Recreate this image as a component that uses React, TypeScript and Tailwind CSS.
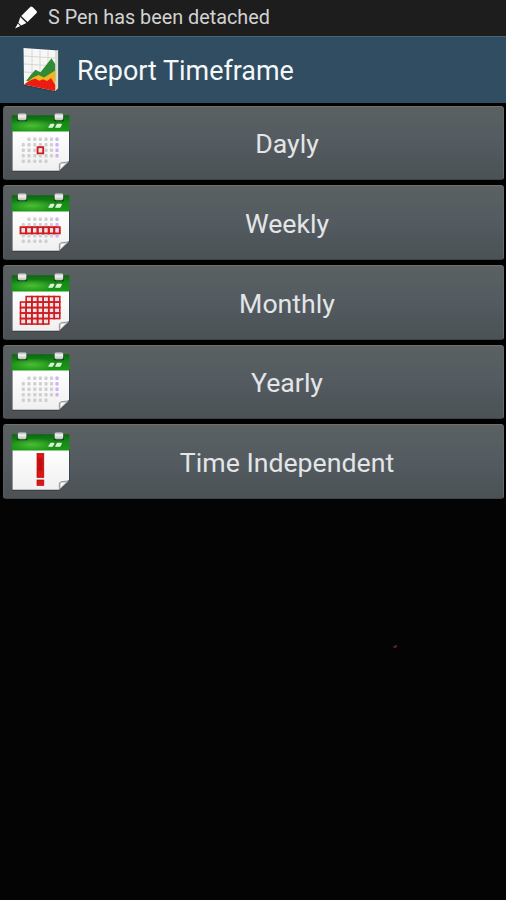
import React from 'react';

type Mark = 'day' | 'week' | 'month' | 'year' | 'none';

const COLS = [12.3, 18, 23.8, 29.4, 35, 40.5, 46];
const ROWS = [27.3, 32.8, 38.3, 43.8, 49.3];

const items: { label: string; mark: Mark }[] = [
  { label: 'Dayly', mark: 'day' },
  { label: 'Weekly', mark: 'week' },
  { label: 'Monthly', mark: 'month' },
  { label: 'Yearly', mark: 'year' },
  { label: 'Time Independent', mark: 'none' },
];

// first row starts on the second column, last row stops at the fifth
const isInMonth = (row: number, col: number) => !(row === 0 && col === 0) && !(row === 4 && col > 4);

const isMarked = (mark: Mark, row: number, col: number) => {
  if (mark === 'day') return row === 2 && col === 3;
  if (mark === 'week') return row === 2;
  return mark === 'month' && isInMonth(row, col);
};

const CalendarIcon: React.FC<{ mark: Mark }> = ({ mark }) => (
  <svg viewBox="0 0 60 60" className="mb-px h-[60px] w-[60px] shrink-0">
    <defs>
      <linearGradient id={`top-${mark}`} x1="0" y1="0" x2="0" y2="1">
        <stop offset="0" stopColor="#0c650e" />
        <stop offset="0.45" stopColor="#178719" />
        <stop offset="1" stopColor="#189a14" />
      </linearGradient>
      <radialGradient id={`glow-${mark}`} cx="0.35" cy="0.65" r="0.4">
        <stop offset="0" stopColor="#5cc93d" stopOpacity="0.8" />
        <stop offset="1" stopColor="#5cc93d" stopOpacity="0" />
      </radialGradient>
      <linearGradient id={`ring-${mark}`} x1="0" y1="0" x2="0" y2="1">
        <stop offset="0" stopColor="#a5aaa5" />
        <stop offset="0.4" stopColor="#f4f4f4" />
        <stop offset="1" stopColor="#b8bdb8" />
      </linearGradient>
      <linearGradient id={`page-${mark}`} x1="0" y1="0" x2="0" y2="1">
        <stop offset="0" stopColor="#ffffff" />
        <stop offset="1" stopColor="#f0f0f1" />
      </linearGradient>
    </defs>
    <path d="M1.2 18H58.5V50L48.5 59.5H1.2Z" fill="#2e3336" />
    <path d="M1.5 18H58V49.5L48.5 58.8H1.5Z" fill={`url(#page-${mark})`} />
    <path d="M0.8 3.2H58.4V19.4H0.8Z" fill={`url(#top-${mark})`} />
    <path d="M0.8 3.2H58.4V19.4H0.8Z" fill={`url(#glow-${mark})`} />
    {[6.8, 43.6].map((x) => (
      <g key={x}>
        <rect x={x - 0.8} y="3.4" width="10.2" height="5.8" rx="1" fill="#0a4b0c" />
        <rect x={x} y="1.2" width="8.6" height="7" rx="1.6" fill={`url(#ring-${mark})`} />
      </g>
    ))}
    <path
      d="M38 15.2L39.8 12.5H42.8L41.3 15.2ZM44.8 15.2L46.3 12.5H50.3L48.8 15.2Z"
      fill="#d9f3d5"
      stroke="#d9f3d5"
      strokeWidth="1.3"
      strokeLinejoin="round"
    />
    {mark === 'none' ? (
      <g fill="#e01414" stroke="#a80e0e" strokeWidth="0.7">
        <rect x="26" y="22.4" width="6.8" height="24" />
        <path d="M27.3 27H31.5V40H27.3Z" fill="#b70b0b" stroke="none" opacity="0.7" />
        <rect x="26" y="49" width="6.8" height="5.4" />
      </g>
    ) : (
      ROWS.map((y, row) =>
        COLS.map((x, col) => {
          const marked = isMarked(mark, row, col);
          return (
            <g key={`${row}-${col}`}>
              {isInMonth(row, col) && (
                <rect
                  x={x - 1.6}
                  y={y - 1.7}
                  width="3.2"
                  height="3.4"
                  rx="1"
                  fill={col === 6 ? '#c8a5f5' : '#c9c9cb'}
                  opacity={marked ? 0.35 : 0.85}
                />
              )}
              {marked && (
                <rect
                  x={x - 2.8}
                  y={y - (mark === 'month' ? 2.75 : 3.1)}
                  width="5.6"
                  height={mark === 'month' ? 5.5 : 6.2}
                  fill="none"
                  stroke="#d11c20"
                  strokeWidth={mark === 'month' ? 1.6 : 1.9}
                />
              )}
            </g>
          );
        })
      )
    )}
    <path d="M58 49.4L48.3 58.8C48.8 56 47.8 53.5 48.6 51.8C50.5 49.6 55 51.2 58 49.4Z" fill="#d8d8d8" stroke="#777b7d" strokeWidth="0.8" />
    <path d="M50 52.2L50 55.5L54 52Z" fill="#ffffff" />
  </svg>
);

const ReportIcon: React.FC = () => (
  <svg viewBox="0 0 38 46" className="h-[46px] w-[38px] shrink-0">
    <path d="M2.5 1L34.5 2.8L38 4V42L34 45L3 38.5Z" fill="#263f4d" />
    <path d="M2.5 1L34.5 3.2V44L3 37.5Z" fill="#f7f7f5" />
    <path d="M34 3.4L37.2 3V41.5L34 44.2Z" fill="#d9dcd7" />
    <path d="M3 9L34 11M3 17L34 19M3 25L34 27M11 2.5V36M19 3.1V37M27 3.7V38" stroke="#cfcfcf" strokeWidth="0.8" fill="none" />
    <path d="M5 34L10.5 27L14.5 22.8L19.5 25.3L30.5 11.3L34.2 17V34H5Z" fill="#2f8b35" />
    <path d="M4 36.8L12 30.5L17.5 28L23 30.5L34.2 23.5V40L20 38Z" fill="#f2b323" />
    <path d="M3 37.5L9 33.5L14 31.6L18.5 33.8L22 32.3L26 34L30 31L34.2 38V44Z" fill="#ed1b10" />
  </svg>
);

const PenIcon: React.FC = () => (
  <svg viewBox="0 0 24 24" className="h-6 w-6 shrink-0 -translate-y-px" fill="#ffffff">
    <path d="M15.5 1.8Q16.5 1 17.5 2L21.5 6Q22.5 7 21.6 8L12.5 17L6.2 11Z" />
    <path d="M5.3 12.1L11.4 18L6.2 20.5L3.4 17.7Z" />
    <path d="M2.9 18.6L5.3 20.9L0 23.5Z" />
  </svg>
);

const App: React.FC = () => {
  return (
    <div className="flex h-[900px] w-[506px] flex-col overflow-hidden bg-[#040404] font-['Roboto','Liberation_Sans',sans-serif]">
      <div className="flex h-9 items-center bg-[#1d1d1d] pl-[15px]">
        <PenIcon />
        <span className="ml-[9px] text-[19.8px] whitespace-nowrap text-[#d2d2d2]">S Pen has been detached</span>
      </div>

      <div className="flex h-[66.5px] items-center border-t border-[#45647a] bg-[#304d61] pl-[21px]">
        <ReportIcon />
        <h1 className="ml-[18px] pt-[2px] text-[26.9px] whitespace-nowrap text-[#f5f7f8]">Report Timeframe</h1>
      </div>

      <div className="flex flex-col gap-[5px] bg-black pt-[3px] pr-[2px] pl-[3px]">
        {items.map((item) => (
          <button
            key={item.label}
            className="flex h-[74.7px] items-center rounded-[3px] border border-t-[#6c7070] border-r-[#60676a] border-b-[#3f4447] border-l-[#565c5f] bg-linear-to-b from-[#5b6161] via-[#535b61] to-[#4b5154] pl-[7px]"
          >
            <CalendarIcon mark={item.mark} />
            <span className="flex-1 pt-[3px] text-center text-[26.7px] text-[#e3e5e6]">{item.label}</span>
          </button>
        ))}
      </div>

      <div className="flex flex-1 justify-end pt-[145px] pr-[108px]">
        <svg viewBox="0 0 6 5" className="h-[5px] w-[6px]">
          <path d="M0.5 3L4.5 0.8L5 3L3 4Z" fill="#6f2039" />
        </svg>
      </div>
    </div>
  );
};

export default App;
